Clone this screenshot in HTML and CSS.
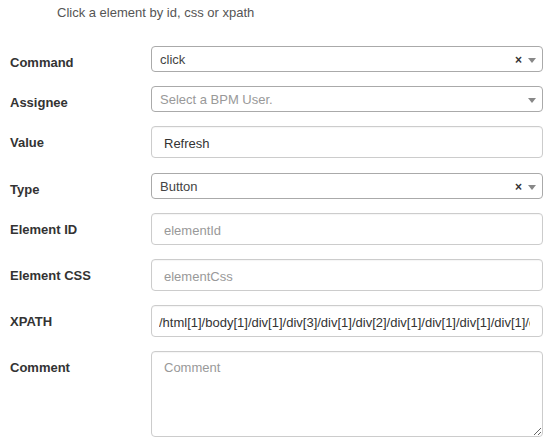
FILE: index.html
```html
<!DOCTYPE html>
<html>
<head>
<meta charset="utf-8">
<link rel="stylesheet" href="styles.css">
</head>
<body>
<div class="page">
  <p class="intro">Click a element by id, css or xpath</p>
  <form class="form">
    <div class="row">
      <label class="label">Command</label>
      <div class="select">
        <span class="select-value">click</span>
        <span class="select-clear">×</span>
        <span class="select-arrow"></span>
      </div>
    </div>
    <div class="row">
      <label class="label">Assignee</label>
      <div class="select">
        <span class="select-value placeholder">Select a BPM User.</span>
        <span class="select-arrow"></span>
      </div>
    </div>
    <div class="row">
      <label class="label">Value</label>
      <input class="input" type="text" value="Refresh">
    </div>
    <div class="row row-select">
      <label class="label">Type</label>
      <div class="select">
        <span class="select-value">Button</span>
        <span class="select-clear">×</span>
        <span class="select-arrow"></span>
      </div>
    </div>
    <div class="row">
      <label class="label">Element ID</label>
      <input class="input" type="text" placeholder="elementId">
    </div>
    <div class="row">
      <label class="label">Element CSS</label>
      <input class="input" type="text" placeholder="elementCss">
    </div>
    <div class="row">
      <label class="label">XPATH</label>
      <input class="input input-xpath" type="text" value="/html[1]/body[1]/div[1]/div[3]/div[1]/div[2]/div[1]/div[1]/div[1]/div[1]/div[2]/div[1]/input[1]">
    </div>
    <div class="row">
      <label class="label">Comment</label>
      <textarea class="textarea" placeholder="Comment"></textarea>
    </div>
  </form>
</div>
</body>
</html>
```

FILE: styles.css
```css
* {
  box-sizing: border-box;
}

html, body {
  margin: 0;
  padding: 0;
  background: #ffffff;
}

body {
  font-family: "Liberation Sans", Arial, sans-serif;
  font-size: 13px;
  color: #333333;
}

.page {
  padding: 4px 7px 0 10px;
}

.intro {
  margin: 0;
  padding-left: 47px;
  line-height: 18px;
  color: #555555;
}

.form {
  margin-top: 24px;
  display: flex;
  flex-direction: column;
  gap: 14px;
}

.row {
  display: grid;
  grid-template-columns: 141px 1fr;
  align-items: start;
}

.row-select {
  margin-top: 1px;
}

.label {
  font-weight: bold;
  line-height: 18px;
  padding-top: 8px;
  color: #333333;
}

.select {
  height: 26px;
  border: 1px solid #aaaaaa;
  border-radius: 4px;
  background: #ffffff;
  display: flex;
  align-items: center;
  padding: 1px 6px 0 8px;
}

.select-value {
  flex: 1;
  line-height: 24px;
  color: #444444;
  white-space: nowrap;
  overflow: hidden;
}

.select-value.placeholder {
  color: #999999;
}

.select-clear {
  font-weight: bold;
  font-size: 12px;
  color: #333333;
  line-height: 24px;
  margin-right: 6px;
}

.select-arrow {
  width: 0;
  height: 0;
  border-left: 4px solid transparent;
  border-right: 4px solid transparent;
  border-top: 5px solid #888888;
  margin-top: 1px;
}

.input {
  display: block;
  width: 100%;
  height: 32px;
  border: 1px solid #cccccc;
  border-radius: 4px;
  padding: 7px 12px 5px;
  font-family: inherit;
  font-size: 13px;
  color: #333333;
  background: #ffffff;
  box-shadow: inset 0 1px 1px rgba(0, 0, 0, 0.04);
  outline: none;
}

.input-xpath {
  padding-left: 7px;
}

.input::placeholder,
.textarea::placeholder {
  color: #999999;
}

.textarea {
  display: block;
  width: 100%;
  height: 86px;
  border: 1px solid #cccccc;
  border-radius: 4px;
  padding: 7px 12px;
  font-family: inherit;
  font-size: 13px;
  line-height: 18px;
  color: #333333;
  background: #ffffff;
  box-shadow: inset 0 1px 1px rgba(0, 0, 0, 0.04);
  outline: none;
  resize: vertical;
  margin: 0;
}
```
